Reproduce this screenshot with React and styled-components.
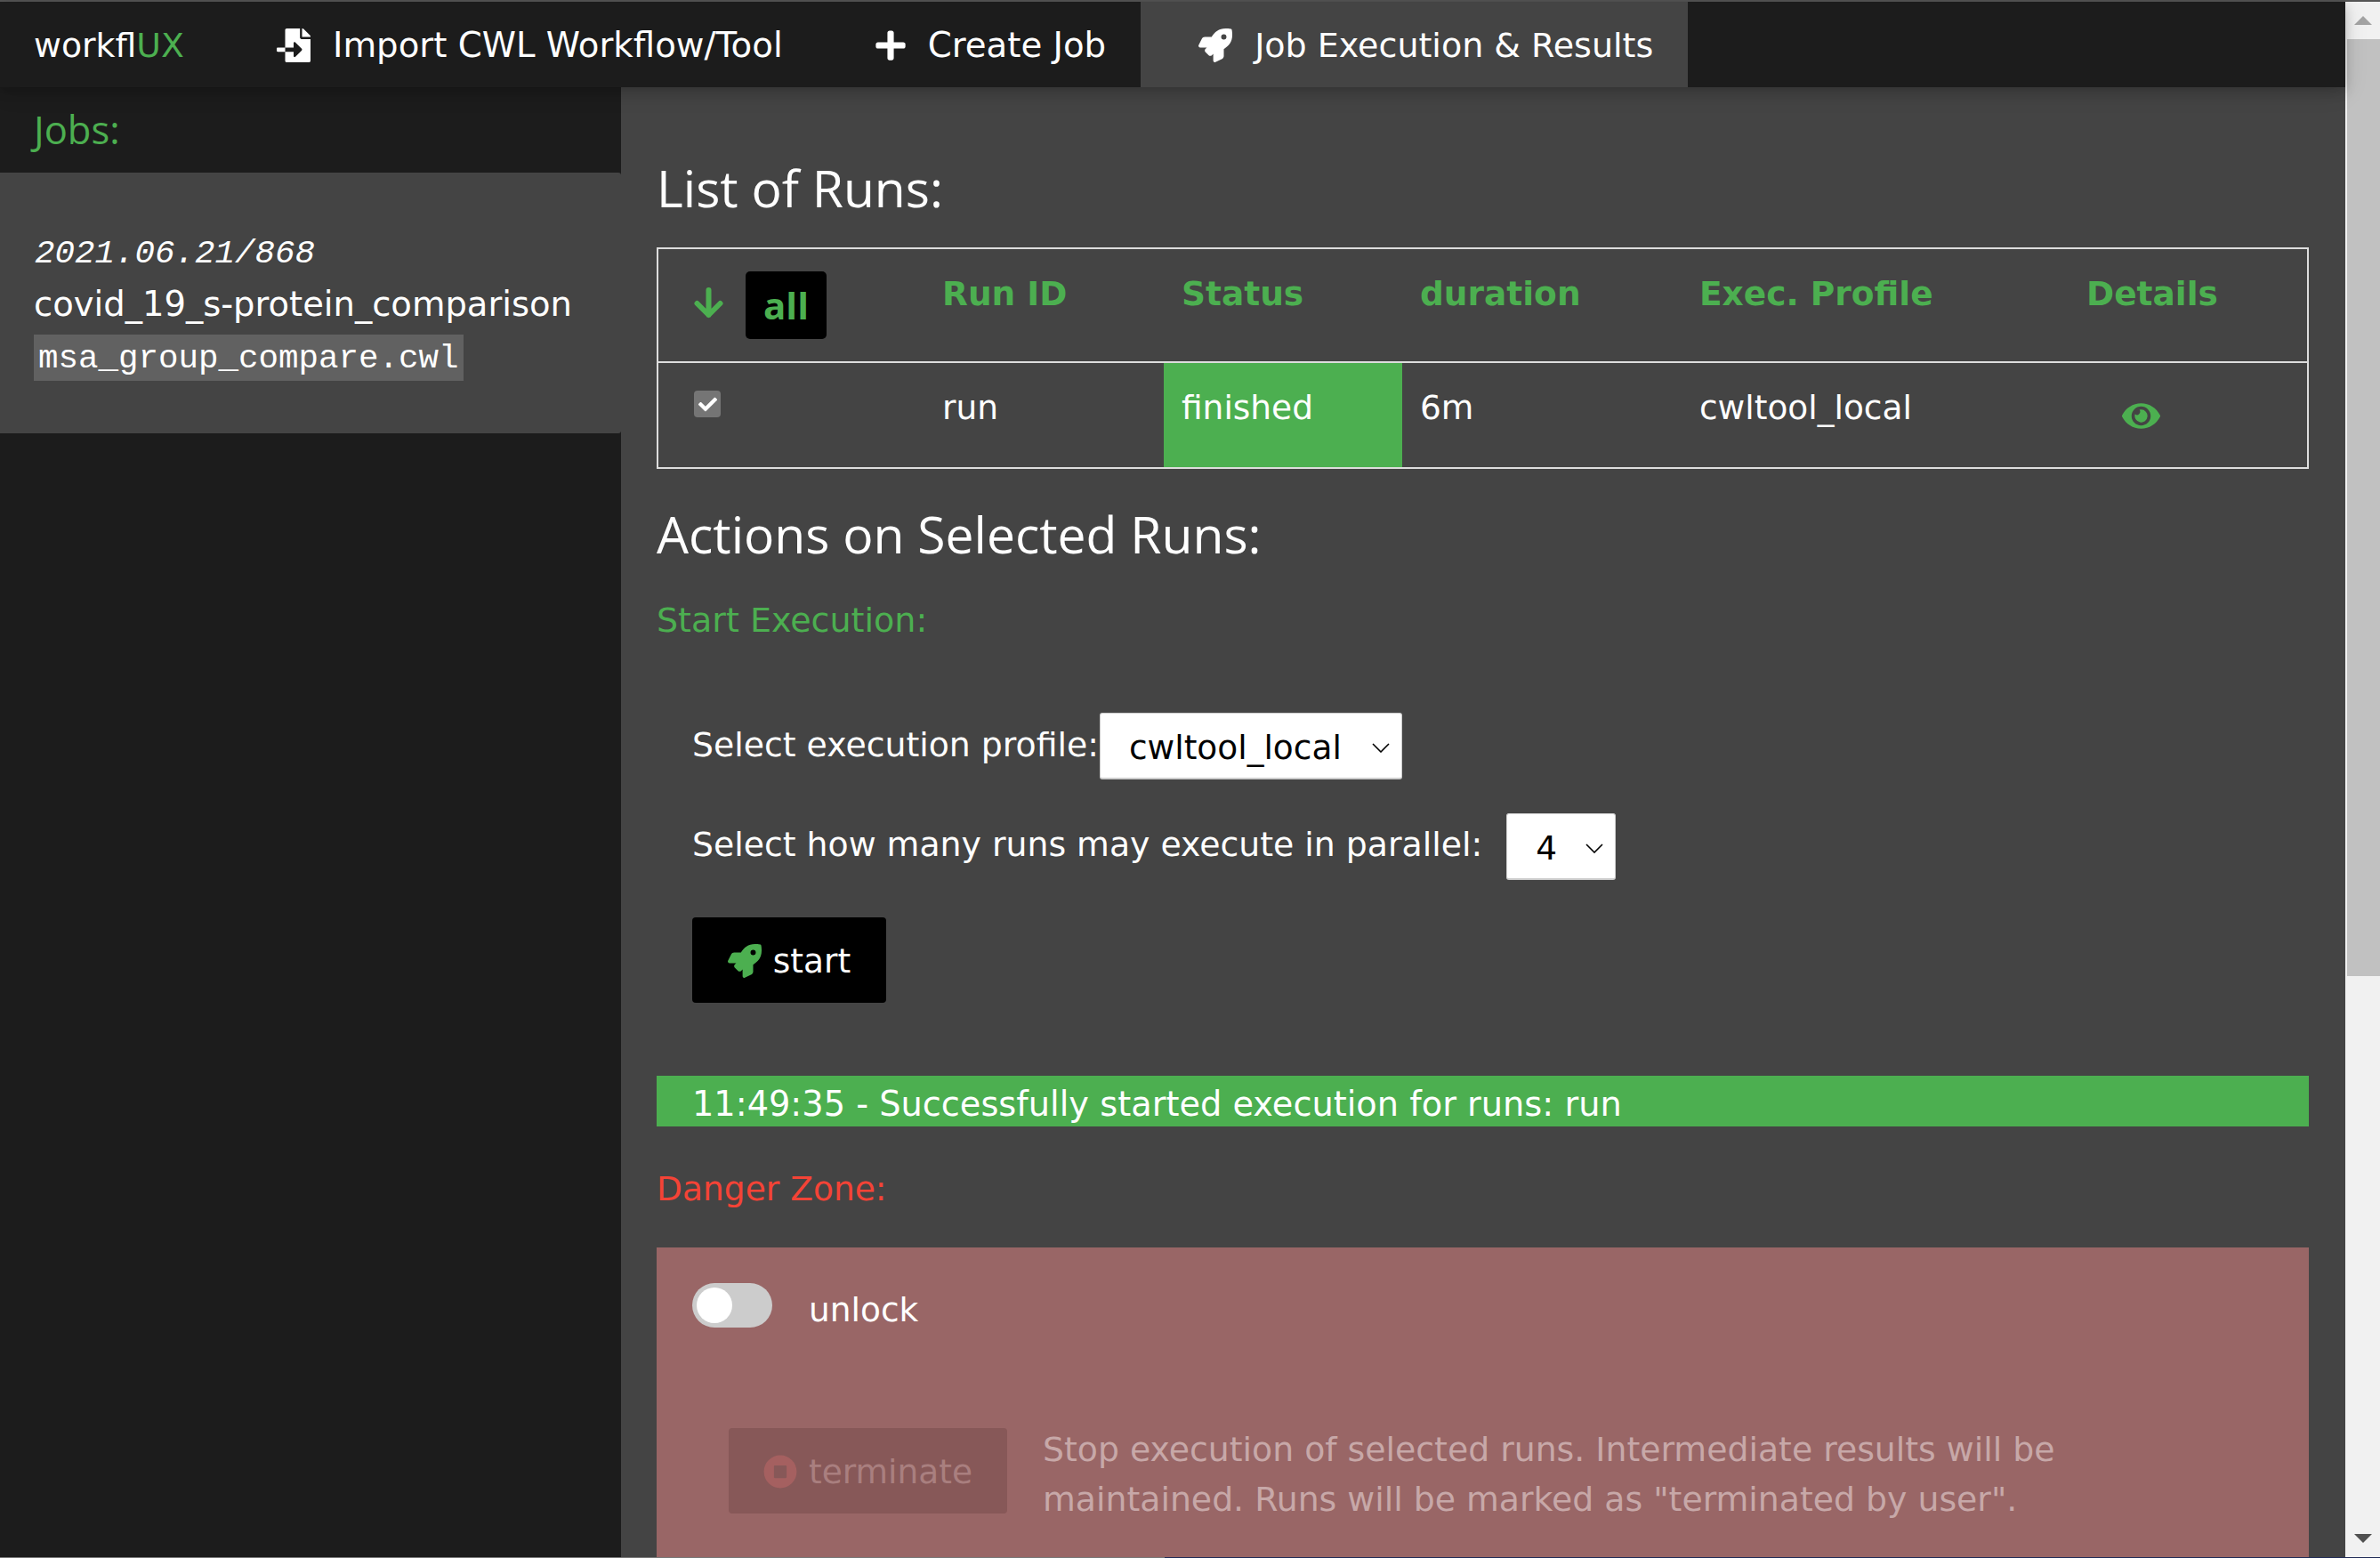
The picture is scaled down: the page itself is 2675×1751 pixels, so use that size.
import React from "react";
import styled, { createGlobalStyle } from "styled-components";
import { FaFileImport, FaPlus, FaRocket, FaEye, FaStopCircle, FaCheck } from "react-icons/fa";

const Global = createGlobalStyle`
  html, body { margin: 0; padding: 0; background: #444; overflow: hidden; }
  * { box-sizing: border-box; }
`;
const Frame = styled.div`
  width: 2675px; height: 1751px; overflow: hidden; display: flex; flex-direction: column;
  font-family: "DejaVu Sans", sans-serif; font-size: 37.5px; line-height: 56px; color: #fff; background: #444;
`;
const TopStrip = styled.div`height: 2px; background: #555; flex: none;`;
const BottomStrip = styled.div`height: 1px; flex: none; display: flex; background: #1f2a55;`;
const BottomGray = styled.div`width: 1309px; background: #777;`;
const Body = styled.div`flex: 1; display: flex; min-height: 0;`;
const Page = styled.div`flex: 1; min-width: 0; display: flex; flex-direction: column;`;
const Nav = styled.nav`
  height: 96px; flex: none; background: #1c1c1c; display: flex; align-items: stretch; position: relative; z-index: 2;
  box-shadow: 0 5px 12px rgba(0,0,0,.16), 0 5px 25px rgba(0,0,0,.12);
`;
const Logo = styled.div`width: 246px; padding: 2px 0 0 38px; display: flex; align-items: center; font-size: 37.8px;`;
const Accent = styled.span`color: #4caf50;`;
const Tab = styled.div`
  display: flex; align-items: center; gap: 25px; padding: 2px 39px 0 65px; font-size: ${p => (p.$active ? 38 : 38.7)}px;
  background: ${p => (p.$active ? "#444" : "transparent")};
`;
const PlusIcon = styled(FaPlus)`margin: 0 -2px;`;
const Columns = styled.div`flex: 1; display: flex; min-height: 0;`;
const Side = styled.aside`width: 698px; flex: none; background: #1c1c1c;`;
const SideHead = styled.div`height: 96px; padding-left: 38px; display: flex; align-items: center; color: #4caf50; font-family: "Open Sans", sans-serif; font-size: 43.5px;`;
const JobCard = styled.div`height: 293px; background: #444; border-radius: 0 3px 3px 0; padding: 63px 38px 0;`;
const JobDate = styled.div`font-family: "Liberation Mono", monospace; font-style: italic; padding-left: 1px;`;
const JobName = styled.div`font-size: 38.5px; margin-top: 1px;`;
const JobFile = styled.code`
  display: inline-block; font-family: "Liberation Mono", monospace; font-size: 37.5px; line-height: 54px; height: 52px; padding: 0 5px; background: #616161; margin-top: 6px;
`;
const Main = styled.main`flex: 1; min-width: 0; padding: 0 41px 0 40px;`;
const Heading = styled.h2`
  font-family: "Open Sans", sans-serif; font-weight: 400; font-size: 57px; line-height: 72px; margin: ${p => p.$mt}px 0 0;
`;
const RunTable = styled.table`
  width: 100%; margin-top: 31px; border-collapse: collapse; border: 2px solid #ddd; table-layout: fixed;
`;
const Th = styled.th`
  height: 128px; width: ${p => p.$w}px; text-align: left; vertical-align: top; color: #4caf50; font-weight: 700; padding: 22px 20px 0; border-bottom: 2px solid #ddd;
`;
const Td = styled.td`
  height: 119px; vertical-align: top; padding: 22px 20px 0; background: ${p => (p.$ok ? "#4caf50" : "transparent")};
`;
const HeadCtl = styled.div`display: flex; align-items: center; gap: 25px; margin: 3px 0 0 20px;`;
const SortArrow = styled.svg`width: 33px; height: 35px; margin-top: -6px; flex: none;`;
const AllBtn = styled.div`
  width: 91px; height: 76px; background: #000; border-radius: 5px; color: #4caf50; display: flex; align-items: center; justify-content: center; font-family: "Open Sans", sans-serif; font-size: 42px;
`;
const Check = styled.div`
  width: 30px; height: 30px; border-radius: 4px; background: #757575; display: flex; align-items: center; justify-content: center; margin: 9px 0 0 20px; font-size: 21px;
`;
const EyeWrap = styled.div`color: #4caf50; margin: 16px 0 0 40px; svg { display: block; }`;
const SectionLabel = styled.div`color: ${p => p.$color}; font-size: ${p => p.$size}px; line-height: 60px; margin-top: ${p => p.$mt}px;`;
const Form = styled.div`padding: 74px 40px 0; display: flex; flex-direction: column; align-items: flex-start;`;
const FormRow = styled.div`display: flex; align-items: center; height: 75px; margin-bottom: ${p => p.$mb}px;`;
const FormLabel = styled.span`font-size: 37.8px; padding-bottom: ${p => p.$pb}px;`;
const Select = styled.div`
  height: 75px; width: ${p => p.$w}px; margin-left: ${p => p.$ml}px; background: #fff; color: #000; border-radius: 3px; border: 1px solid #ccc; border-bottom-width: 2px;
  display: flex; align-items: center; justify-content: space-between; padding: 4px 13px 0 32px;
`;
const Chevron = () => (
  <svg width="20" height="11" viewBox="0 0 20 11" fill="none" stroke="#000" strokeWidth="1.6"><path d="M1 1 10 10 19 1" /></svg>
);
const StartBtn = styled.div`
  width: 218px; height: 96px; background: #000; border-radius: 4px; display: flex; align-items: center; justify-content: center; gap: 13px; padding-top: 2px;
  svg { color: #4caf50; }
`;
const Banner = styled.div`height: 57px; background: #4caf50; margin-top: 82px; padding-left: 40px; font-size: 38.3px; line-height: 64px;`;
const DangerBox = styled.div`margin-top: 36px; height: 500px; background: #996666; padding: 40px;`;
const UnlockRow = styled.div`display: flex; align-items: flex-start; gap: 41px;`;
const UnlockText = styled.span`margin-top: 2px;`;
const Toggle = styled.div`width: 90px; height: 50px; border-radius: 25px; background: #ccc; padding: 5px;`;
const Knob = styled.div`width: 40px; height: 40px; border-radius: 50%; background: #fff;`;
const TermRow = styled.div`display: flex; align-items: center; gap: 40px; margin: 92px 0 0 41px;`;
const TermBtn = styled.div`
  width: 313px; height: 96px; flex: none; background: #875858; border-radius: 4px; display: flex; align-items: center; justify-content: center; gap: 13px; color: #a97f7f; padding-top: 3px;
  svg { color: #a56060; }
`;
const TermText = styled.div`color: #c7a8a8; font-size: 37.8px; width: 1180px; margin-top: 9px;`;
const Scrollbar = styled.div`width: 39px; flex: none; background: #f1f1f1; display: flex; flex-direction: column;`;
const ArrowBox = styled.div`height: 42px; flex: none; display: flex; align-items: center; justify-content: center;`;
const Thumb = styled.div`height: 1053px; background: #c1c1c1; margin-left: 2px;`;
const Spacer = styled.div`flex: 1;`;

export default function App() {
  return (
    <Frame>
      <Global />
      <TopStrip />
      <Body>
        <Page>
          <Nav>
            <Logo>workfl<Accent>UX</Accent></Logo>
            <Tab><FaFileImport size={38} />Import CWL Workflow/Tool</Tab>
            <Tab><PlusIcon size={38} />Create Job</Tab>
            <Tab $active><FaRocket size={38} />Job Execution &amp; Results</Tab>
          </Nav>
          <Columns>
            <Side>
              <SideHead>Jobs:</SideHead>
              <JobCard>
                <JobDate>2021.06.21/868</JobDate>
                <JobName>covid_19_s-protein_comparison</JobName>
                <JobFile>msa_group_compare.cwl</JobFile>
              </JobCard>
            </Side>
            <Main>
              <Heading $mt={77}>List of Runs:</Heading>
              <RunTable>
                <thead>
                  <tr>
                    <Th $w={300}>
                      <HeadCtl>
                        <SortArrow viewBox="0 0 33 35" fill="none" stroke="#4caf50" strokeWidth="6" strokeLinecap="round" strokeLinejoin="round">
                          <path d="M16.5 3V31M3.5 18 16.5 31 29.5 18" />
                        </SortArrow>
                        <AllBtn>all</AllBtn>
                      </HeadCtl>
                    </Th>
                    <Th $w={269}>Run ID</Th>
                    <Th $w={268}>Status</Th>
                    <Th $w={314}>duration</Th>
                    <Th $w={435}>Exec. Profile</Th>
                    <Th>Details</Th>
                  </tr>
                </thead>
                <tbody>
                  <tr>
                    <Td><Check><FaCheck /></Check></Td>
                    <Td>run</Td>
                    <Td $ok>finished</Td>
                    <Td>6m</Td>
                    <Td>cwltool_local</Td>
                    <Td><EyeWrap><FaEye size={43} /></EyeWrap></Td>
                  </tr>
                </tbody>
              </RunTable>
              <Heading $mt={37}>Actions on Selected Runs:</Heading>
              <SectionLabel $color="#4caf50" $size={38} $mt={31}>Start Execution:</SectionLabel>
              <Form>
                <FormRow $mb={38}><FormLabel $pb={4}>Select execution profile:</FormLabel><Select $w={340} $ml={1}>cwltool_local<Chevron /></Select></FormRow>
                <FormRow $mb={42}><FormLabel $pb={6}>Select how many runs may execute in parallel:</FormLabel><Select $w={123} $ml={27}>4<Chevron /></Select></FormRow>
                <StartBtn><FaRocket size={38} />start</StartBtn>
              </Form>
              <Banner>11:49:35 - Successfully started execution for runs: run</Banner>
              <SectionLabel $color="#f44336" $size={37.6} $mt={40}>Danger Zone:</SectionLabel>
              <DangerBox>
                <UnlockRow><Toggle><Knob /></Toggle><UnlockText>unlock</UnlockText></UnlockRow>
                <TermRow>
                  <TermBtn><FaStopCircle size={38} />terminate</TermBtn>
                  <TermText>Stop execution of selected runs. Intermediate results will be maintained. Runs will be marked as "terminated by user".</TermText>
                </TermRow>
              </DangerBox>
            </Main>
          </Columns>
        </Page>
        <Scrollbar>
          <ArrowBox><svg width="20" height="10" viewBox="0 0 20 10"><path d="M10 0 20 10H0Z" fill="#a3a3a3" /></svg></ArrowBox>
          <Thumb />
          <Spacer />
          <ArrowBox><svg width="20" height="10" viewBox="0 0 20 10"><path d="M0 0H20L10 10Z" fill="#505050" /></svg></ArrowBox>
        </Scrollbar>
      </Body>
      <BottomStrip><BottomGray /></BottomStrip>
    </Frame>
  );
}
